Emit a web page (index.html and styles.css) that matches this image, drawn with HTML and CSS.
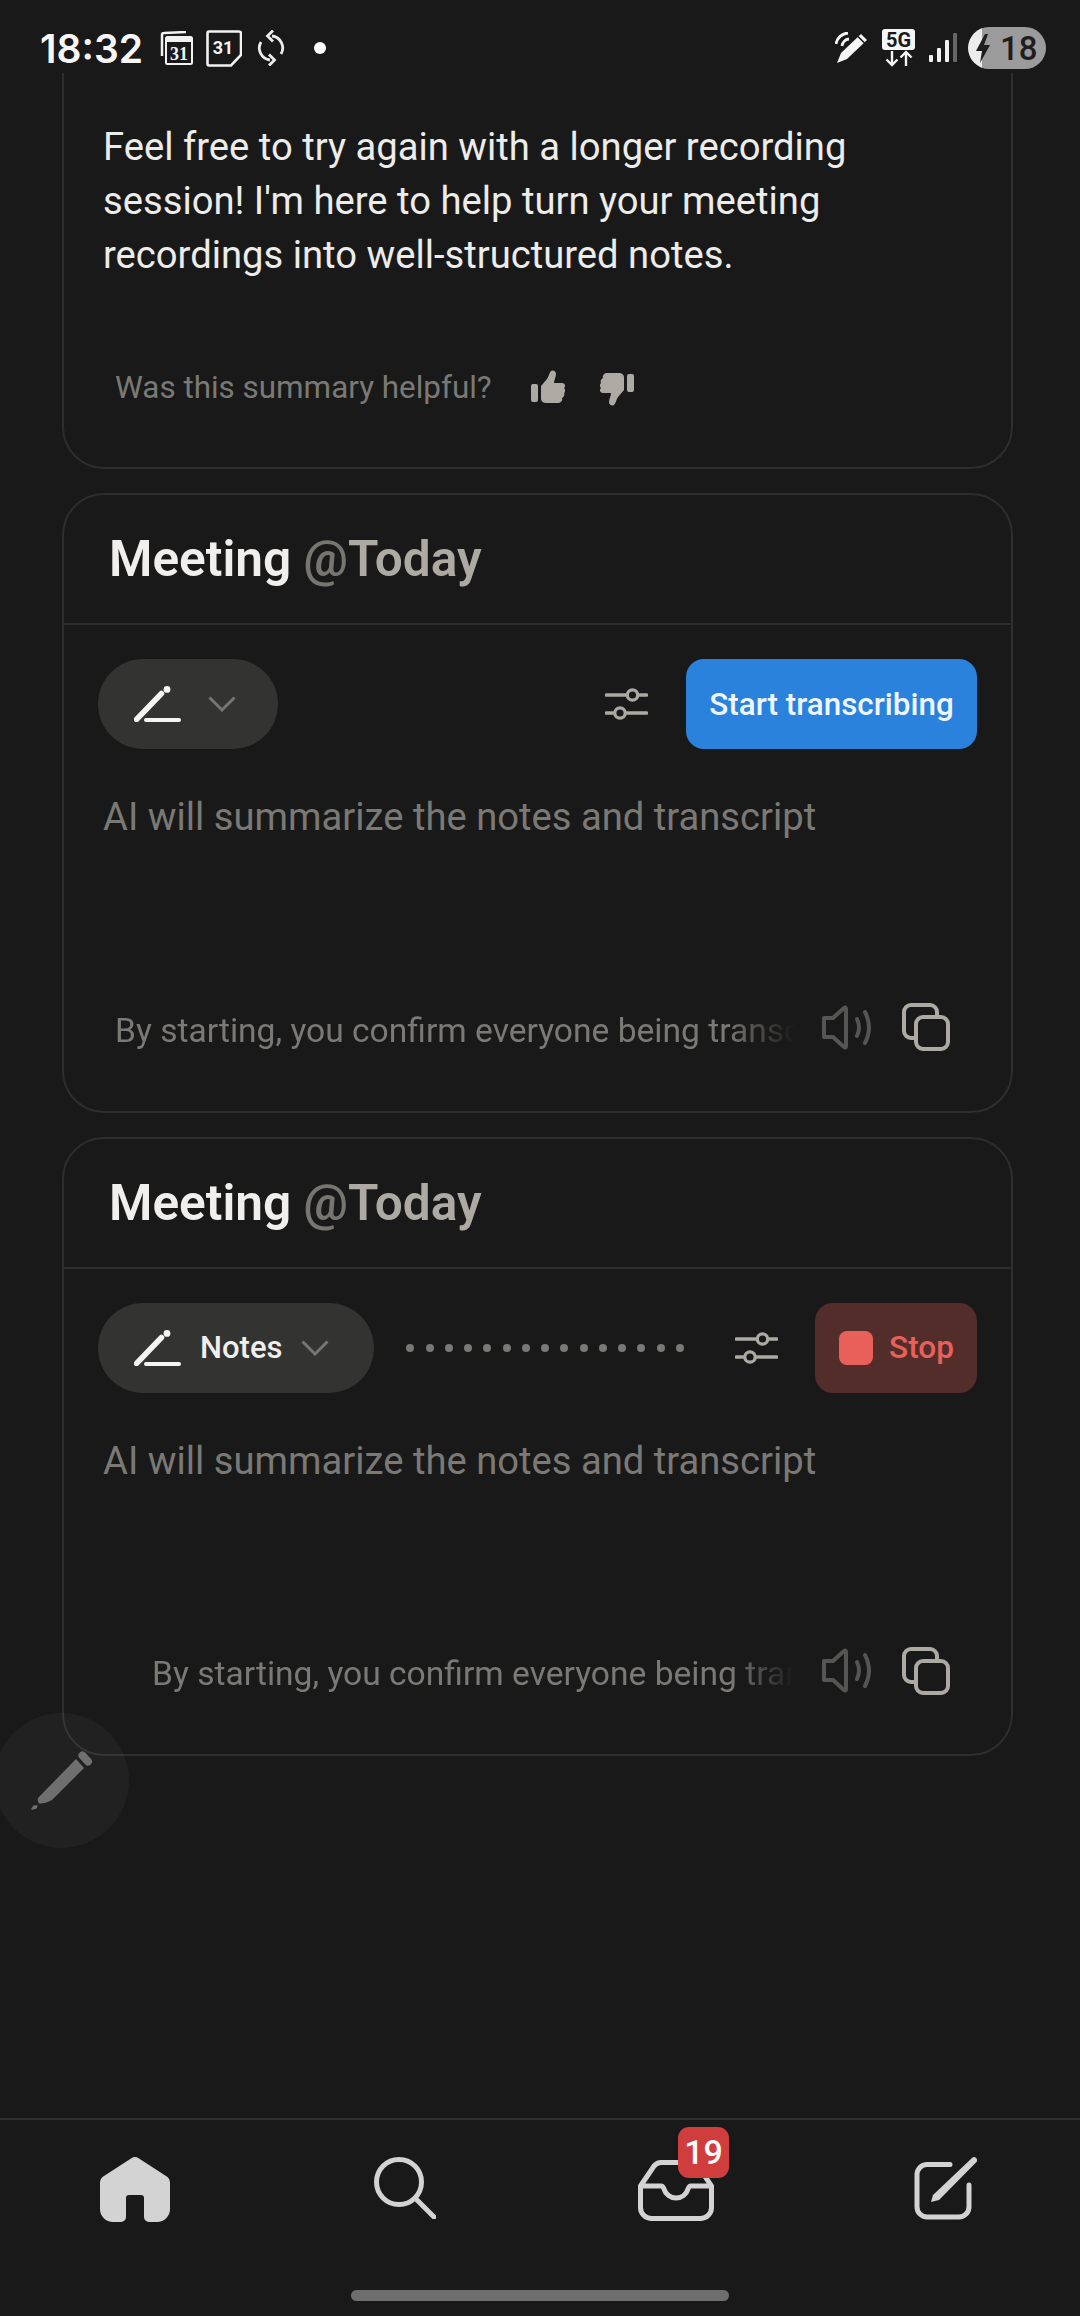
FILE: index.html
```html
<!DOCTYPE html>
<html lang="en">
<head>
    <meta charset="UTF-8">
    <meta name="viewport" content="width=device-width, initial-scale=1.0">
    <title>Meeting notes</title>
    <link rel="stylesheet" href="styles.css">
</head>
<body>
    <!-- shared icons -->
    <svg class="sprite" width="0" height="0">
        <symbol id="pen-line" viewBox="0 0 47 36">
            <path d="M2.500 33.500 L27.500 7.500" fill="none" stroke="currentColor" stroke-width="5.500" stroke-linecap="round"/>
            <circle cx="33" cy="3.4" r="3.4" fill="currentColor"/>
            <path d="M12 34 H45" fill="none" stroke="currentColor" stroke-width="4" stroke-linecap="round"/>
        </symbol>
        <symbol id="chevron" viewBox="0 0 28 16">
            <path d="M1.5 1.5 L14 14 L26.500 1.500" fill="none" stroke="currentColor" stroke-width="3"/>
        </symbol>
        <symbol id="sliders" viewBox="0 0 43 32">
            <path d="M1.500 7 H41.500 M1.500 25 H41.500" stroke="currentColor" stroke-width="3.600" stroke-linecap="round"/>
            <circle cx="27.500" cy="7" r="5.200" fill="#191919" stroke="currentColor" stroke-width="3.200"/>
            <circle cx="15" cy="25" r="5.200" fill="#191919" stroke="currentColor" stroke-width="3.200"/>
        </symbol>
        <symbol id="speaker" viewBox="0 0 50 45">
            <path d="M2 13 H11 L22 3 Q24 1.500 24 4 V41 Q24 43.500 22 42 L11 32 H2 Z" fill="none" stroke="currentColor" stroke-width="4" stroke-linejoin="round"/>
            <path d="M35 14 Q39 22.500 35 31 M43 7 Q51 22.500 43 38" fill="none" stroke="currentColor" stroke-width="4" stroke-linecap="round"/>
        </symbol>
        <symbol id="copy" viewBox="0 0 48 48">
            <path d="M35 12 V9 A7 7 0 0 0 28 2 H9 A7 7 0 0 0 2 9 V28 A7 7 0 0 0 9 35 H12" fill="none" stroke="currentColor" stroke-width="4"/>
            <rect x="14" y="14" width="32" height="32" rx="7" fill="none" stroke="currentColor" stroke-width="4"/>
        </symbol>
        <symbol id="thumb" viewBox="0 0 34 33">
            <rect x="0" y="14" width="7" height="18" rx="2" fill="currentColor"/>
            <path d="M10 16 L16 9 C18 6 18 3 20 1 C22 -0.500 25 1 25 4 C25 7 23 10 23 13 H31 C34 13 35 16 33 18 C35 20 34 22 33 23 C34 25 33 27 31 28 C32 30 30 33 27 33 H15 C12 33 10 31 10 29 Z" fill="currentColor"/>
        </symbol>
    </svg>

    <div class="screen">
        <header class="status-bar">
            <span class="clock">18:32</span>
            <svg class="st-cal-a" width="33" height="34" viewBox="0 0 33 34">
                <path d="M2 25 V4 Q2 2 4 2 L26 1" fill="none" stroke="#f2f2f2" stroke-width="2.500"/>
                <rect x="6" y="6" width="26" height="27" rx="1.500" fill="#191919" stroke="#f2f2f2" stroke-width="2"/>
                <rect x="6" y="6" width="26" height="5" fill="#f2f2f2"/>
                <text x="19" y="29" class="st-cal-num st-cal-serif">31</text>
            </svg>
            <svg class="st-cal-b" width="36" height="37" viewBox="0 0 36 37">
                <path d="M3 1.500 H33 Q35 1.500 35 3.500 V25 L25 35.500 H3 Q1.500 35.500 1.500 33.500 V3.500 Q1.500 1.500 3 1.500 Z" fill="none" stroke="#f2f2f2" stroke-width="2.600"/>
                <text x="17" y="24" class="st-cal-num">31</text>
            </svg>
            <svg class="st-sync" width="28" height="36" viewBox="0 0 28 36">
                <path d="M15 6 A12 12 0 0 1 24 24 M13 30 A12 12 0 0 1 4 12" fill="none" stroke="#ececec" stroke-width="2.800"/>
                <path d="M16 0.500 L10.500 6 L16 11.500 M12 24.500 L17.500 30 L12 35.500" fill="none" stroke="#ececec" stroke-width="2.800"/>
            </svg>
            <span class="st-dot"></span>
            <span class="st-spacer"></span>
            <svg class="st-pen" width="33" height="32" viewBox="0 0 33 32">
                <path d="M1 12 A13 13 0 0 1 13 1 M7 14 A8 8 0 0 1 14 7" fill="none" stroke="#f5f5f5" stroke-width="2.800"/>
                <path d="M26 2 L32 8 L12 27 L2 31 L6 21 Z" fill="#f5f5f5"/>
                <path d="M23 4.500 L29.500 11" stroke="#191919" stroke-width="1.600"/>
            </svg>
            <svg class="st-5g" width="34" height="38" viewBox="0 0 34 38">
                <rect x="0" y="0" width="33" height="21" rx="3" fill="#f5f5f5"/>
                <text x="16.500" y="18" class="st-5g-text">5G</text>
                <path d="M10 22 V36 M4.500 30.500 L10 36 L15.500 30.500 M24 37 V23 M18.500 28.500 L24 23 L29.500 28.500" fill="none" stroke="#f5f5f5" stroke-width="2.400"/>
            </svg>
            <svg class="st-signal" width="28" height="29" viewBox="0 0 28 29">
                <rect x="0" y="22" width="4" height="7" rx="1" fill="#f2f2f2"/>
                <rect x="8" y="15" width="4" height="14" rx="1" fill="#f2f2f2"/>
                <rect x="16" y="7" width="4" height="22" rx="1" fill="#f2f2f2"/>
                <rect x="24" y="0" width="4" height="29" rx="1" fill="#666"/>
            </svg>
            <div class="battery">
                <svg width="15" height="29" viewBox="0 0 15 29"><path d="M9 0 L0 17 H6 L4 29 L14 11 H8 L12 0 Z" fill="#1e1e1e"/></svg>
                <span>18</span>
            </div>
        </header>

        <main class="feed">
            <section class="card card-first">
                <p class="summary">Feel free to try again with a longer recording session! I'm here to help turn your meeting recordings into well-structured notes.</p>
                <div class="feedback">
                    <span class="feedback-label">Was this summary helpful?</span>
                    <svg class="thumb" width="34" height="33"><use href="#thumb"/></svg>
                    <svg class="thumb thumb-down" width="34" height="33"><use href="#thumb"/></svg>
                </div>
            </section>

            <section class="card">
                <div class="card-head"><h2>Meeting <span class="at">@</span><span class="day">Today</span></h2></div>
                <div class="toolbar">
                    <button class="pill"><svg class="pill-pen" width="47" height="36"><use href="#pen-line"/></svg><svg class="pill-chevron" width="28" height="16"><use href="#chevron"/></svg></button>
                    <span class="grow"></span>
                    <svg class="sliders" width="43" height="32"><use href="#sliders"/></svg>
                    <button class="btn-start">Start transcribing</button>
                </div>
                <p class="placeholder">AI will summarize the notes and transcript</p>
                <div class="card-foot">
                    <div class="notice">By starting, you confirm everyone being transcribed has given consent</div>
                    <svg class="speaker" width="50" height="45"><use href="#speaker"/></svg>
                    <svg class="copy" width="48" height="48"><use href="#copy"/></svg>
                </div>
            </section>

            <section class="card">
                <div class="card-head"><h2>Meeting <span class="at">@</span><span class="day">Today</span></h2></div>
                <div class="toolbar">
                    <button class="pill pill-notes"><svg class="pill-pen" width="47" height="36"><use href="#pen-line"/></svg><span>Notes</span><svg class="pill-chevron" width="28" height="16"><use href="#chevron"/></svg></button>
                    <div class="dots">
                        <i></i><i></i><i></i><i></i><i></i><i></i><i></i><i></i><i></i><i></i><i></i><i></i><i></i><i></i><i></i>
                    </div>
                    <svg class="sliders" width="43" height="32"><use href="#sliders"/></svg>
                    <button class="btn-stop"><span class="stop-square"></span>Stop</button>
                </div>
                <p class="placeholder">AI will summarize the notes and transcript</p>
                <div class="card-foot">
                    <div class="notice notice-moved">By starting, you confirm everyone being transcribed has given consent</div>
                    <svg class="speaker" width="50" height="45"><use href="#speaker"/></svg>
                    <svg class="copy" width="48" height="48"><use href="#copy"/></svg>
                </div>
            </section>
        </main>

        <nav class="tabbar">
            <div class="tab">
                <svg width="70" height="65" viewBox="0 0 70 65"><path d="M31 1.500 A7 7 0 0 1 39 1.500 L66 19 A8 8 0 0 1 70 26 V52 A13 13 0 0 1 57 65 H49 A5 5 0 0 1 44 60 V41 A3 3 0 0 0 41 38 H29 A3 3 0 0 0 26 41 V60 A5 5 0 0 1 21 65 H13 A13 13 0 0 1 0 52 V26 A8 8 0 0 1 4 19 Z" fill="#d3d3d3"/></svg>
            </div>
            <div class="tab">
                <svg width="62" height="62" viewBox="0 0 62 62"><circle cx="25" cy="25" r="22.500" fill="none" stroke="#d3d3d3" stroke-width="5"/><path d="M42 42 L60 60" stroke="#d3d3d3" stroke-width="5" stroke-linecap="round"/></svg>
            </div>
            <div class="tab">
                <span class="inbox">
                    <svg width="76" height="61" viewBox="0 0 76 61"><path d="M2.500 26 L16 6 Q19 2.500 23 2.500 H53 Q57 2.500 60 6 L73.500 26 V47 A11 11 0 0 1 62 58.500 H14 A11 11 0 0 1 2.500 47 Z M2.500 26 H23 Q25 26 26 29 A12.500 12.500 0 0 0 50 29 Q51 26 53 26 H73.500" fill="none" stroke="#d3d3d3" stroke-width="5"/></svg>
                    <span class="badge">19</span>
                </span>
            </div>
            <div class="tab">
                <svg width="63" height="63" viewBox="0 0 63 63"><path d="M36 7.500 H13 A10 10 0 0 0 3 17.500 V50 A10 10 0 0 0 13 60 H45 A10 10 0 0 0 55 50 V28" fill="none" stroke="#d3d3d3" stroke-width="5" stroke-linecap="round"/><path d="M58 1 A3 3 0 0 1 62 5.500 L25 43 L17 45 L19 38 Z" fill="#d3d3d3"/></svg>
            </div>
        </nav>
        <div class="home-row"><span class="home-bar"></span></div>

        <!-- floating edit button, sits over the cards -->
        <div class="fab">
            <svg width="65" height="65" viewBox="0 0 65 65">
                <path d="M46 9 L54 18 L22 50 Q15 54 9 53.500 Q7 51 8 48 Z" fill="#6f6f6f"/>
                <path d="M52.500 5.500 L58 11.500" stroke="#6f6f6f" stroke-width="8" stroke-linecap="round"/>
                <path d="M2 59 L4 56 L7 56 L6 58 Z" fill="#6f6f6f" stroke="#6f6f6f" stroke-width="1.500" stroke-linejoin="round"/>
            </svg>
        </div>
    </div>
</body>
</html>
```

FILE: styles.css
```css
* {
    box-sizing: border-box;
}
body {
    margin: 0;
    background-color: #191919;
    font-family: Roboto, "Liberation Sans", sans-serif;
}
.sprite {
    position: absolute;
}
.screen {
    position: relative;
    width: 1080px;
    height: 2316px;
    display: flex;
    flex-direction: column;
    overflow: hidden;
    background-color: #191919;
}

/* status bar */
.status-bar {
    height: 73px;
    flex: none;
    display: flex;
    align-items: center;
    padding: 23px 34px 0 40px;
}
.clock {
    font-family: Inter, Roboto, sans-serif;
    font-size: 39px;
    font-weight: 600;
    color: #f7f7f7;
    width: 120px;
}
.st-cal-b {
    margin-left: 13px;
}
.st-sync {
    margin-left: 15px;
}
.st-dot {
    width: 12px;
    height: 12px;
    margin-left: 29px;
    border-radius: 50%;
    background-color: #fff;
}
.st-spacer {
    flex: 1;
}
.st-5g {
    margin-left: 14px;
}
.st-signal {
    margin-left: 13px;
    margin-top: -1px;
}
.st-cal-num {
    font-family: Roboto, sans-serif;
    font-size: 18px;
    font-weight: 700;
    fill: #f2f2f2;
    text-anchor: middle;
}
.st-cal-serif {
    font-family: "Liberation Serif", serif;
}
.st-5g-text {
    font-family: Roboto, sans-serif;
    font-size: 20px;
    font-weight: 700;
    fill: #191919;
    text-anchor: middle;
}
.battery {
    width: 78px;
    height: 42px;
    margin-left: 11px;
    padding-left: 8px;
    display: flex;
    align-items: center;
    gap: 9px;
    border-radius: 21px;
    background: linear-gradient(90deg, #ececec 18%, #9b9b9b 18%);
    color: #1e1e1e;
    font-size: 33px;
    font-weight: 500;
}

/* cards */
.feed {
    flex: 1;
    min-height: 0;
    overflow: hidden;
    display: flex;
    flex-direction: column;
    gap: 24px;
    padding: 0 67px 0 62px;
}
.card {
    flex: none;
    height: 619.5px;
    border: 2px solid #2e2e2e;
    border-radius: 42px;
}
.card-first {
    height: 436px;
    margin-top: -40px;
    padding: 85px 39px 0;
}
.summary {
    max-width: 770px;
    margin: 0;
    font-size: 38.2px;
    line-height: 54px;
    color: #ececea;
}
.feedback {
    display: flex;
    align-items: center;
    margin-top: 87px;
    padding-left: 12px;
}
.feedback-label {
    width: 416px;
    font-size: 31.4px;
    color: #7b7975;
}
.thumb {
    color: #adaaa3;
    margin-top: -3px;
}
.thumb-down {
    margin-left: 35px;
    margin-top: 4px;
    transform: rotate(180deg);
}
.card-head {
    height: 130px;
    display: flex;
    align-items: center;
    padding-left: 45px;
    border-bottom: 2px solid #2e2e2e;
}
h2 {
    margin: 0;
    font-size: 49.6px;
    font-weight: 600;
    color: #f0efed;
}
.at {
    color: #777570;
}
.day {
    color: #adaaa3;
}
.toolbar {
    display: flex;
    align-items: center;
    height: 90px;
    margin: 34px 34px 0;
}
.grow {
    flex: 1;
}
.pill {
    height: 90px;
    display: flex;
    align-items: center;
    padding: 0 42px 0 36px;
    gap: 27px;
    border: none;
    border-radius: 45px;
    background-color: #333331;
    font-family: inherit;
    font-size: 31px;
    font-weight: 500;
    color: #f0efed;
}
.pill-notes {
    gap: 19px;
    padding-right: 45px;
}
.pill-pen {
    color: #f4f4f2;
}
.pill-chevron {
    color: #777570;
}
.dots {
    flex: 1;
    display: flex;
    justify-content: space-between;
    padding: 0 51px 0 32px;
}
.dots i {
    width: 8px;
    height: 8px;
    border-radius: 50%;
    background-color: #7b7976;
}
.sliders {
    color: #adaaa3;
}
.btn-start {
    width: 291px;
    height: 90px;
    margin-left: 38px;
    border: none;
    border-radius: 18px;
    background-color: #2a82dc;
    font-family: inherit;
    font-size: 31.4px;
    font-weight: 500;
    color: #eef7ff;
}
.btn-stop {
    width: 162px;
    height: 90px;
    margin-left: 37px;
    padding-left: 24px;
    display: flex;
    align-items: center;
    gap: 16px;
    border: none;
    border-radius: 18px;
    background-color: #532d2a;
    font-family: inherit;
    font-size: 31.6px;
    font-weight: 500;
    color: #e9605a;
}
.stop-square {
    width: 34px;
    height: 34px;
    border-radius: 8px;
    background-color: #e9605a;
}
.placeholder {
    margin: 43px 39px 0;
    font-size: 38.2px;
    line-height: 50px;
    color: #7b7975;
}
.card-foot {
    display: flex;
    align-items: center;
    height: 48px;
    margin-top: 161px;
    padding: 0 61px 0 51px;
}
.notice {
    width: 680px;
    flex: none;
    overflow: hidden;
    white-space: nowrap;
    font-size: 33.6px;
    margin-top: 6px;
    color: #7b7975;
    -webkit-mask-image: linear-gradient(90deg, #000 90%, transparent 100%);
    mask-image: linear-gradient(90deg, #000 90%, transparent 100%);
}
.notice-moved {
    width: 643px;
    margin-left: 37px;
}
.speaker {
    margin-left: 27px;
    color: #555553;
}
.copy {
    margin-left: 30px;
    color: #adaaa3;
}

/* bottom nav */
.tabbar {
    flex: none;
    height: 172px;
    display: grid;
    grid-template-columns: repeat(4, 270px);
    border-top: 2px solid #2e2e2e;
}
.tab {
    display: flex;
    justify-content: center;
    padding-top: 37px;
}
.inbox {
    position: relative;
    display: block;
    height: 61px;
    margin: 3px 0 0 2px;
}
.badge {
    position: absolute;
    left: 40px;
    top: -33px;
    width: 51px;
    height: 51px;
    border-radius: 11px;
    background-color: #cf3d3d;
    color: #fff;
    font-size: 34px;
    font-weight: 500;
    line-height: 51px;
    text-align: center;
}
.home-row {
    flex: none;
    height: 26px;
    display: flex;
    justify-content: center;
}
.home-bar {
    width: 378px;
    height: 11px;
    border-radius: 6px;
    background-color: #6e6e6e;
}

/* floating button */
.fab {
    position: absolute;
    left: -6px;
    top: 1713px;
    width: 135px;
    height: 135px;
    border-radius: 50%;
    background-color: rgba(255, 255, 255, 0.035);
}
.fab svg {
    position: absolute;
    left: 36px;
    top: 37px;
}
```
